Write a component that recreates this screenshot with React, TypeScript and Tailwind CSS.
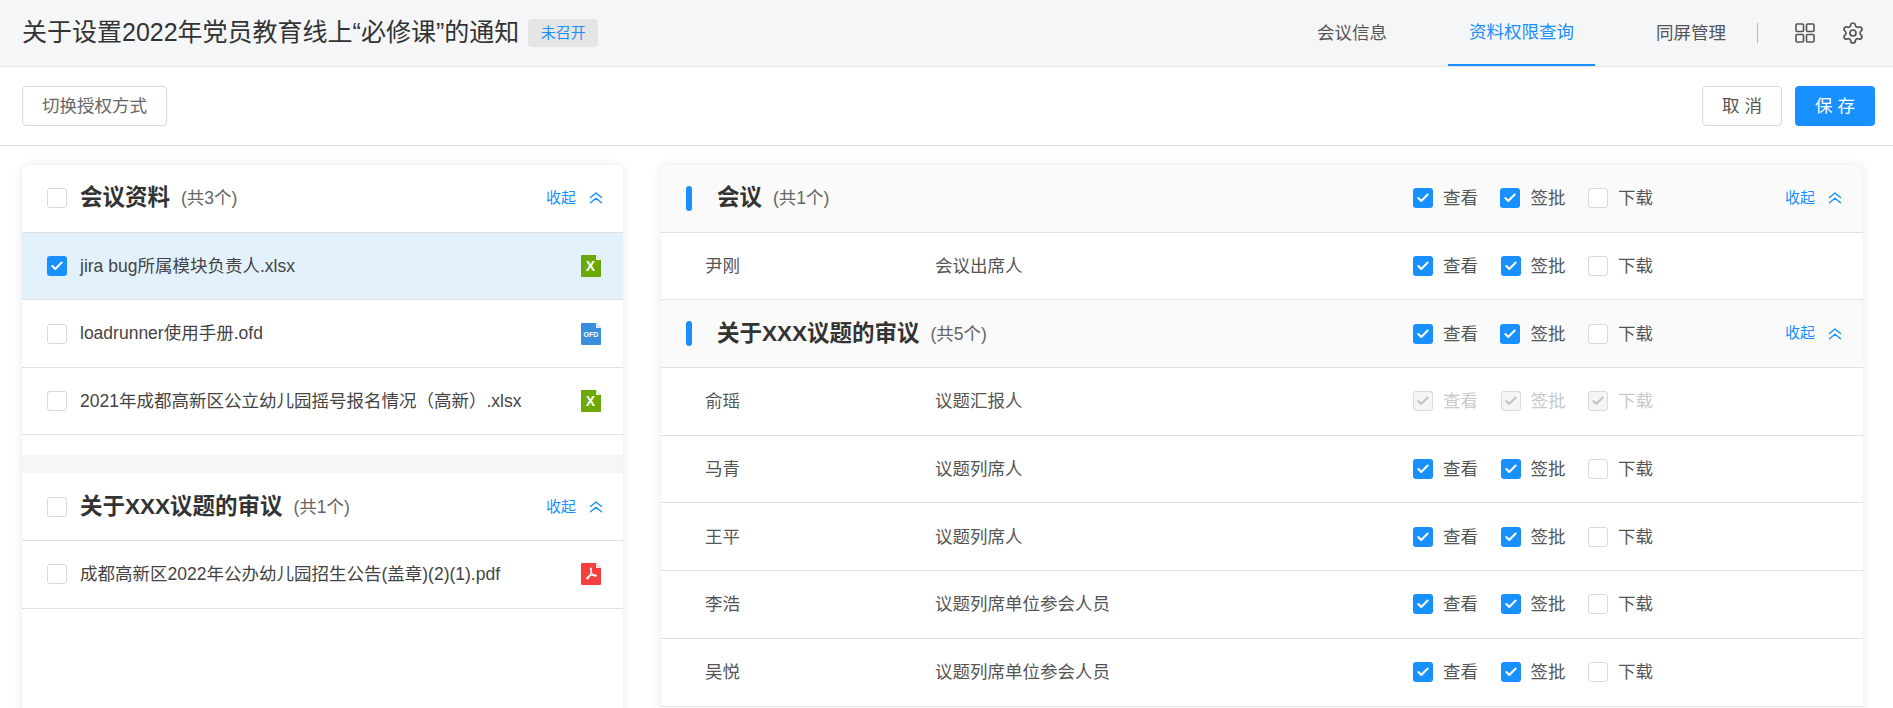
import { Settings, Check } from "lucide-react";

const FONT = "font-['Liberation_Sans','Noto_Sans_CJK_SC',sans-serif]";

const AGENDA_ROWS = [
  { name: "俞瑶", role: "议题汇报人", disabled: true },
  { name: "马青", role: "议题列席人" },
  { name: "王平", role: "议题列席人" },
  { name: "李浩", role: "议题列席单位参会人员" },
  { name: "吴悦", role: "议题列席单位参会人员" },
];

function CheckBox({ checked, disabled }: { checked?: boolean; disabled?: boolean }) {
  if (disabled) {
    return (
      <span className="flex h-5 w-5 shrink-0 items-center justify-center rounded-[3px] border border-[#d9d9d9] bg-[#f5f5f5]">
        <Check size={14} strokeWidth={3.5} className="text-[#c4c4c4]" />
      </span>
    );
  }
  if (checked) {
    return (
      <span className="flex h-5 w-5 shrink-0 items-center justify-center rounded-[3px] bg-[#1890ff]">
        <Check size={14} strokeWidth={3.5} className="text-white" />
      </span>
    );
  }
  return <span className="h-5 w-5 shrink-0 rounded-[3px] border border-[#d9d9d9] bg-white" />;
}

function Collapse() {
  return (
    <span className="flex items-center gap-[13px] text-[15px] text-[#1890ff]">
      收起
      <svg width="14" height="12" viewBox="0 0 14 12" fill="none" stroke="currentColor" strokeWidth="1.4" strokeLinecap="round" strokeLinejoin="round">
        <path d="M1.500 5.500L7 1l5.500 4.500" />
        <path d="M1.500 10.800L7 6.300l5.500 4.500" />
      </svg>
    </span>
  );
}

function Perm({ label, checked, disabled }: { label: string; checked?: boolean; disabled?: boolean }) {
  return (
    <span className={`flex w-[87.5px] items-center gap-[10px] text-[17.5px] ${disabled ? "text-[#c9c9c9]" : "text-[#555]"}`}>
      <CheckBox checked={checked} disabled={disabled} />
      {label}
    </span>
  );
}

function Perms({ disabled }: { disabled?: boolean }) {
  return (
    <div className="flex">
      <Perm label="查看" checked disabled={disabled} />
      <Perm label="签批" checked disabled={disabled} />
      <Perm label="下载" disabled={disabled} />
    </div>
  );
}

function FileIcon({ color, kind }: { color: string; kind: "x" | "ofd" | "pdf" }) {
  return (
    <svg width="20" height="22" viewBox="0 0 20 22" className="shrink-0">
      <path d="M1 0H15L20 5V21a1 1 0 0 1-1 1H1a1 1 0 0 1-1-1V1a1 1 0 0 1 1-1Z" fill={color} />
      <path d="M15 0L20 5H15Z" fill="#fff" opacity="0.85" />
      {kind === "x" && (
        <text x="9.5" y="16" textAnchor="middle" fontSize="14" fontWeight="700" fill="#fff" fontFamily="Liberation Sans">
          X
        </text>
      )}
      {kind === "ofd" && (
        <text x="10" y="14" textAnchor="middle" fontSize="7" fontWeight="700" fill="#fff" fontFamily="Liberation Sans">
          OFD
        </text>
      )}
      {kind === "pdf" && (
        <path
          d="M10 5c-.8 0-.6 2.500 1 5.500 1.200 2 3 3 4 2.500.8-.5-.5-1.500-3-1.200-2.500.3-5 1.500-6 3-.7 1.200.5 1.500 1.500 0 1.200-1.800 3-6 2.800-8.500C10.300 5.500 10.200 5 10 5Z"
          fill="none"
          stroke="#fff"
          strokeWidth="1.200"
        />
      )}
    </svg>
  );
}

function FileRow({ name, color, kind, selected }: { name: string; color: string; kind: "x" | "ofd" | "pdf"; selected?: boolean }) {
  return (
    <div className={`flex h-[67.6px] items-center border-b border-[#e0e0e0] pl-[25px] pr-[22px] ${selected ? "bg-[#e3f1fd]" : ""}`}>
      <CheckBox checked={selected} />
      <span className="ml-[13px] flex-1 text-[17.5px] text-[#444]">{name}</span>
      <FileIcon color={color} kind={kind} />
    </div>
  );
}

function LeftHeader({ title, count }: { title: string; count: string }) {
  return (
    <div className="flex h-[67.7px] items-center border-b border-[#e0e0e0] pl-[25px] pr-5">
      <CheckBox />
      <span className="ml-[13px] text-[22.5px] font-bold text-[#333]">{title}</span>
      <span className="ml-[11px] flex-1 text-[17.5px] text-[#666]">{count}</span>
      <Collapse />
    </div>
  );
}

function RightHeader({ title, count }: { title: string; count: string }) {
  return (
    <div className="flex h-[67.7px] items-center border-b border-[#e0e0e0] bg-[#fafafa] pl-[25px] pr-[21px]">
      <span className="h-[25px] w-[6px] rounded-full bg-[#1890ff]" />
      <span className="ml-[25px] text-[22.5px] font-bold text-[#333]">{title}</span>
      <span className="ml-[11px] flex-1 text-[17.5px] text-[#666]">{count}</span>
      <div className="w-[372px]">
        <Perms />
      </div>
      <Collapse />
    </div>
  );
}

function PersonRow({ name, role, disabled }: { name: string; role: string; disabled?: boolean }) {
  return (
    <div className="flex h-[67.7px] items-center border-b border-[#e0e0e0] pl-11 text-[17.5px] text-[#555]">
      <span className="w-[230px]">{name}</span>
      <span className="flex-1">{role}</span>
      <div className="w-[450px]">
        <Perms disabled={disabled} />
      </div>
    </div>
  );
}

export default function App() {
  return (
    <div className={`${FONT} flex h-[708px] flex-col overflow-hidden bg-white`}>
      <header className="flex h-[67px] shrink-0 items-center border-b border-[#e6e6e6] bg-[#f5f6f8] pl-[22px] pr-[28px]">
        <h1 className="text-[25px] font-normal text-[#333]">关于设置2022年党员教育线上“必修课”的通知</h1>
        <span className="ml-[9px] flex h-7 w-[70px] items-center justify-center rounded bg-[#e5e5e5] text-[15px] text-[#1890ff]">
          未召开
        </span>
        <nav className="ml-auto flex h-full items-center gap-10 text-[17.5px] text-[#555]">
          <a className="flex h-full items-center px-[21px]">会议信息</a>
          <a className="flex h-full items-center border-b-2 border-[#1890ff] px-[21px] text-[#1890ff]">资料权限查询</a>
          <a className="flex h-full items-center px-[21px]">同屏管理</a>
        </nav>
        <span className="ml-[10px] h-5 w-px bg-[#bbb]" />
        <svg width="20" height="20" viewBox="0 0 20 20" fill="none" stroke="#555" strokeWidth="1.6" className="ml-[37px]">
          <rect x="1" y="1" width="7.500" height="7.500" rx="1" />
          <rect x="11.500" y="1" width="7.500" height="7.500" rx="1" />
          <rect x="1" y="11.500" width="7.500" height="7.500" rx="1" />
          <rect x="11.500" y="11.500" width="7.500" height="7.500" rx="1" />
        </svg>
        <Settings size={24} strokeWidth={1.7} className="ml-[26px] text-[#555]" />
      </header>

      <div className="flex h-[79px] shrink-0 items-center justify-between border-b border-[#dcdcdc] pl-[22px] pr-[18px]">
        <button className="h-10 w-[145px] rounded border border-[#d9d9d9] bg-white text-[17.5px] text-[#666]">切换授权方式</button>
        <div className="flex gap-[13px]">
          <button className="h-10 w-[80px] rounded border border-[#d9d9d9] bg-white text-[17.5px] text-[#555]">取 消</button>
          <button className="h-10 w-[80px] rounded bg-[#1890ff] text-[17.5px] text-white">保 存</button>
        </div>
      </div>

      <main className="flex min-h-0 flex-1 gap-[38px] pl-[22px] pr-[30px] pt-[19px]">
        <section className="h-[700px] w-[601px] shrink-0 rounded-lg bg-white shadow-[0_0_10px_rgba(0,0,0,0.1)]">
          <LeftHeader title="会议资料" count="(共3个)" />
          <FileRow name="jira bug所属模块负责人.xlsx" color="#6aa906" kind="x" selected />
          <FileRow name="loadrunner使用手册.ofd" color="#3a8fdd" kind="ofd" />
          <FileRow name="2021年成都高新区公立幼儿园摇号报名情况（高新）.xlsx" color="#6aa906" kind="x" />
          <div className="mt-5 h-[18px] bg-[#f5f6f8]" />
          <LeftHeader title="关于XXX议题的审议" count="(共1个)" />
          <FileRow name="成都高新区2022年公办幼儿园招生公告(盖章)(2)(1).pdf" color="#f5403f" kind="pdf" />
        </section>

        <section className="h-[700px] flex-1 overflow-hidden rounded-lg bg-white shadow-[0_0_10px_rgba(0,0,0,0.1)]">
          <RightHeader title="会议" count="(共1个)" />
          <PersonRow name="尹刚" role="会议出席人" />
          <RightHeader title="关于XXX议题的审议" count="(共5个)" />
          {AGENDA_ROWS.map((row) => (
            <PersonRow key={row.name} {...row} />
          ))}
        </section>
      </main>
    </div>
  );
}
